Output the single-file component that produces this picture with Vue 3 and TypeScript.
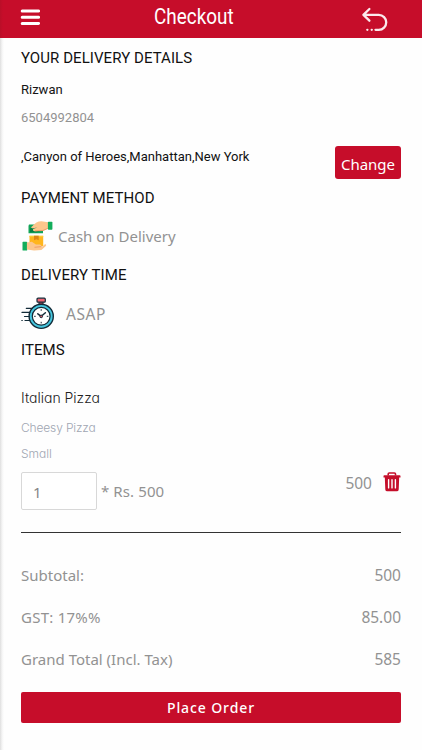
<script setup lang="ts">
import { ref } from 'vue'

interface TotalRow {
  label: string
  value: string
  spacing: string
}

const quantity = ref('1')
const totals: TotalRow[] = [
  { label: 'Subtotal:', value: '500', spacing: 'subtotal' },
  { label: 'GST: 17%%', value: '85.00', spacing: 'gst' },
  { label: 'Grand Total (Incl. Tax)', value: '585', spacing: 'grand' },
]
</script>

<template>
  <div class="screen">
    <header class="bar">
      <svg class="menu" width="20" height="18" viewBox="0 0 20 18">
        <path d="M2.2 2.1h16.4M2.2 8.3h16.4M2.2 14.4h16.4" stroke="#fff" stroke-width="3" stroke-linecap="round" />
      </svg>
      <h1 class="title"><span>Checkout</span></h1>
      <svg class="back" width="28" height="26" viewBox="0 0 28 26" fill="none" stroke="#fbe9ec" stroke-width="2.3" stroke-linecap="round" stroke-linejoin="round">
        <path d="M8.4 2L2.4 7.9l6 5.8M2.7 7.9h15.1a7.4 7.4 0 0 1 0 14.9h-3.3" />
        <path d="M6.3 22.8h.1M10.7 22.8h.1" />
      </svg>
    </header>

    <main class="content">
      <h2 class="heading first">YOUR DELIVERY DETAILS</h2>
      <p class="name">Rizwan</p>
      <p class="phone">6504992804</p>
      <div class="address">
        <p>,Canyon of Heroes,Manhattan,New York</p>
        <button class="change" type="button">Change</button>
      </div>

      <h2 class="heading">PAYMENT METHOD</h2>
      <div class="option">
        <svg width="32" height="32" viewBox="0 0 32 32">
          <path d="M8 4.5h14v8.7H7.5V6z" fill="#12a357" />
          <path d="M9 8.5l5-3.7h7v5.5l-5 2H9z" fill="#087f43" />
          <path d="M11 6.5C14 3 17 1.2 20.5 1.3l6.5 1v6.2l-4.8 2.2-8.8.5c-1.8-.2-2-2.2-.2-2.7l3.4-1.1-4.7.8c-1.7.3-2.4-.8-.9-1.7z" fill="#fcc68c" />
          <path d="M14 10.8l8-.3 4.8-2.1" fill="none" stroke="#ef9d68" />
          <rect x="26.9" y="1.8" width="4.5" height="8" rx=".7" fill="#13ad5b" />
          <path d="M8.5 15.8h13.7v10.4H8.5z" fill="#ffb51c" />
          <path d="M8.5 15.8h13.7v1.3H8.5z" fill="#ffc934" />
          <path d="M13 15.8h4.7v4.5l-2.3-1-2.4 1z" fill="#dd8617" />
          <rect x="1.5" y="21.8" width="4.7" height="8.8" rx=".7" fill="#13ad5b" />
          <path d="M5.9 22.5l5-.8 4 2.7h3.8c2 .2 2 2.4.1 2.5l-4 .3 6.6-.7 2.2-2c1.7-.6 2.1.7 1 1.8l-4.2 3.7-7.3.6-7.2-1.2z" fill="#fcc68c" />
          <path d="M13.5 27.3l7-.7" stroke="#ef9d68" />
        </svg>
        <span class="cash">Cash on Delivery</span>
      </div>

      <h2 class="heading time">DELIVERY TIME</h2>
      <div class="option">
        <svg width="34" height="34" viewBox="0 0 34 34" fill="none">
          <path d="M18 4v4h4V4" fill="#b94754" stroke="#122b38" />
          <rect x="16" y="1.2" width="8.3" height="4" rx="1" fill="#ef6473" stroke="#122b38" stroke-width="1.2" />
          <circle cx="20.2" cy="19.3" r="12.1" fill="#45c6de" stroke="#122b38" stroke-width="1.4" />
          <circle cx="20.2" cy="19.3" r="8.9" fill="#fff" stroke="#122b38" stroke-width="1.2" />
          <path d="M16.8 16.8l3.4 2.5 4.2-3.6" stroke="#122b38" stroke-width="1.5" stroke-linecap="round" stroke-linejoin="round" />
          <circle cx="20.2" cy="19.4" r="1.3" fill="#dd5867" stroke="#122b38" />
          <path d="M20.2 12.6v.8M20.2 25.2v.8M13.5 19.3h.8M26.2 19.3h.8" stroke="#122b38" stroke-linecap="round" />
          <path d="M5.3 11.3h6M1 15.4h7.8M3.5 19.5h4.6M.8 23.5h.5M4 23.5h4.8" stroke="#122b38" stroke-width="1.2" stroke-linecap="round" />
        </svg>
        <span class="asap">ASAP</span>
      </div>

      <h2 class="heading items">ITEMS</h2>
      <section class="item">
        <h3>Italian Pizza</h3>
        <p class="variant">Cheesy Pizza</p>
        <p class="size">Small</p>
        <div class="quantity-row">
          <input v-model="quantity" class="quantity" type="text" />
          <span class="unit">* Rs. 500</span>
          <span class="price">500</span>
          <svg class="trash" width="18" height="20" viewBox="0 0 18 20" fill="none">
            <path d="M5.2 3.4V2.1q0-1.1 1.1-1.1h5.1q1.1 0 1.1 1.1v1.3" stroke="#c50e2a" stroke-width="1.6" />
            <path d="M1.4 3.2h15.2q.9 0 .9.9v1.4H.5V4.1q0-.9.9-.9zM1.8 5h14.4l-.5 12.4q-.1 1.9-2 1.9H4.3q-1.9 0-2-1.9z" fill="#c50e2a" />
            <path d="M5.6 7.7v8.2M9 7.7v8.2M12.4 7.7v8.2" stroke="#fff" stroke-width="1.4" stroke-linecap="round" />
          </svg>
        </div>
      </section>

      <dl class="totals">
        <div v-for="row in totals" :key="row.label" class="total">
          <dt :class="row.spacing">{{ row.label }}</dt>
          <dd>{{ row.value }}</dd>
        </div>
      </dl>
      <button class="place" type="button">Place Order</button>
    </main>
  </div>
</template>

<style>
body {
  margin: 0;
  background: #fefefe;
}
</style>

<style scoped>
* {
  box-sizing: border-box;
}
h1, h2, h3, p, dl, dt, dd {
  margin: 0;
  font-weight: 400;
}
svg {
  display: block;
  flex: none;
}
.screen {
  height: 750px;
  overflow: hidden;
  color: #929292;
  background: linear-gradient(to right, #dedede, #f4f4f4 2px, #fefefe 4px);
  font: 400 15px/20px "Noto Sans", sans-serif;
  white-space: nowrap;
}
.bar {
  display: grid;
  grid-template-columns: 1fr auto 1fr;
  height: 38px;
  padding: 0 33px 0 20px;
  background: linear-gradient(to right, #b90f28, #c60d2a 3px);
}
.menu {
  margin-top: 9px;
}
.title {
  width: 80px;
  margin-right: 31px;
  margin-left: 10px;
  color: #fff;
  font: 400 22.5px/33px Roboto, sans-serif;
}
.title span {
  display: inline-block;
  transform: scaleX(.84);
  transform-origin: left;
}
.back {
  justify-self: end;
  margin-top: 7px;
}
.content {
  display: flex;
  flex-direction: column;
  padding: 0 21px;
}
.heading {
  color: #111;
  font: 400 15px/32px Roboto, sans-serif;
  letter-spacing: .07px;
}
.heading.first {
  line-height: 40px;
}
.heading.time {
  line-height: 34px;
}
.heading.items {
  height: 26px;
  line-height: 28px;
}
.name {
  color: #151515;
  font: 400 13px/24px Roboto, sans-serif;
}
.phone {
  font: 400 13px/32px Roboto, sans-serif;
}
.address {
  display: flex;
  justify-content: space-between;
  height: 48px;
  color: #111;
  font: 400 13px/46px Roboto, sans-serif;
}
.change {
  width: 66px;
  height: 33px;
  margin-top: 12px;
  padding: 2px 0 0;
  border: 0;
  border-radius: 3px;
  background: #c60d2a;
  color: #fff;
  font: 400 15px/30px "Noto Sans", sans-serif;
}
.option {
  display: flex;
  align-items: center;
  height: 44px;
}
.cash {
  margin-left: 5px;
  letter-spacing: 0;
}
.asap {
  margin-left: 11px;
  font-size: 15.5px;
  letter-spacing: .6px;
}
.item {
  height: 149px;
  margin-top: 22px;
  border-bottom: 1px solid #333;
}
.item h3 {
  height: 28px;
  color: #222;
  font: 300 14px/28px Inter, sans-serif;
}
.variant {
  height: 32px;
  color: #a0a6b2;
  font: 300 12px/32px Inter, sans-serif;
  letter-spacing: -.15px;
}
.size {
  height: 20px;
  color: #a0a6b2;
  font: 300 12px/20px Inter, sans-serif;
}
.item h3,
.variant,
.size {
  font-feature-settings: "cv11";
}
.quantity-row {
  display: flex;
  height: 68px;
  padding-top: 8px;
  line-height: 38px;
}
.quantity {
  width: 76px;
  height: 38px;
  padding: 2px 11px 0;
  border: 1px solid #d8d8d8;
  border-radius: 2px;
  outline: 0;
  background: #fff;
  color: #858585;
  font: 400 15px/20px "Noto Sans", sans-serif;
}
.unit {
  margin-left: 4px;
  letter-spacing: .1px;
}
.price {
  margin-left: auto;
  line-height: 22px;
}
.trash {
  margin-left: 11px;
}
.price,
.total dd {
  font-size: 15.5px;
}
.totals {
  margin-top: 21px;
}
.total {
  display: flex;
  justify-content: space-between;
  height: 42px;
  line-height: 42px;
}
.gst {
  letter-spacing: .25px;
}
.place {
  height: 31px;
  margin-top: 12px;
  padding: 0;
  border: 0;
  border-radius: 2px;
  background: #c60d2a;
  color: #fff;
  font: 500 14px/31px "Noto Sans", sans-serif;
  letter-spacing: .9px;
}
</style>
